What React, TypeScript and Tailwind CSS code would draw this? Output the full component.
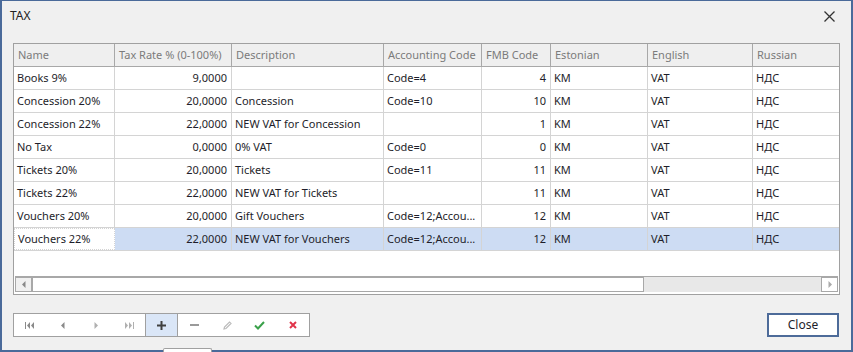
const rows = [
  { name: 'Books 9%', rate: '9,0000', desc: '', acc: 'Code=4', fmb: '4' },
  { name: 'Concession 20%', rate: '20,0000', desc: 'Concession', acc: 'Code=10', fmb: '10' },
  { name: 'Concession 22%', rate: '22,0000', desc: 'NEW VAT for Concession', acc: '', fmb: '1' },
  { name: 'No Tax', rate: '0,0000', desc: '0% VAT', acc: 'Code=0', fmb: '0' },
  { name: 'Tickets 20%', rate: '20,0000', desc: 'Tickets', acc: 'Code=11', fmb: '11' },
  { name: 'Tickets 22%', rate: '22,0000', desc: 'NEW VAT for Tickets', acc: '', fmb: '11' },
  { name: 'Vouchers 20%', rate: '20,0000', desc: 'Gift Vouchers', acc: 'Code=12;Accou...', fmb: '12' },
  { name: 'Vouchers 22%', rate: '22,0000', desc: 'NEW VAT for Vouchers', acc: 'Code=12;Accou...', fmb: '12' },
]

const cols = 'grid grid-cols-[101px_117px_152px_98px_69px_97px_105px_1fr]'

function NavIcon({ kind }: { kind: string }) {
  const c = '#8a8a8a'
  if (kind === 'first')
    return (
      <svg width="10" height="7" viewBox="0 0 10 7">
        <rect x="0" y="0" width="1" height="7" fill={c} />
        <path d="M5 0 L2 3.5 L5 7Z M9 0 L6 3.5 L9 7Z" fill={c} />
      </svg>
    )
  if (kind === 'prev')
    return (
      <svg width="4" height="7" viewBox="0 0 4 7">
        <path d="M3.5 0 L0 3.5 L3.5 7Z" fill={c} />
      </svg>
    )
  if (kind === 'next')
    return (
      <svg width="4" height="7" viewBox="0 0 4 7">
        <path d="M0.5 0 L4 3.5 L0.5 7Z" fill="#b0b0b0" />
      </svg>
    )
  return (
    <svg width="10" height="7" viewBox="0 0 10 7">
      <path d="M1 0 L4 3.5 L1 7Z M5 0 L8 3.5 L5 7Z" fill="#b0b0b0" />
      <rect x="9" y="0" width="1" height="7" fill="#b0b0b0" />
    </svg>
  )
}

export default function App() {
  const font = { fontFamily: '"Noto Sans", "Open Sans", sans-serif' }
  return (
    <div
      className="relative w-[853px] h-[352px] bg-[#f0f0f0] border-t border-x-2 border-b-2 border-[#4a6a9a] text-[11px] text-[#1e1e2a]"
      style={font}
    >
      <div className="flex items-center justify-between h-[30px] pl-[8px] pr-[16px]">
        <span className="text-[12px] text-[#222]">TAX</span>
        <svg width="11" height="11" viewBox="0 0 11 11">
          <path d="M0.5 0.5 L10.5 10.5 M10.5 0.5 L0.5 10.5" stroke="#333" strokeWidth="1.3" />
        </svg>
      </div>

      <div className="ml-[11px] mt-[12px] w-[827px] h-[252px] border border-[#a0a0a0] bg-white flex flex-col">
        <div className={`${cols} h-[23px] bg-[#efefef] text-[#7b7b7b] border-b border-[#a8a8a8]`}>
          {['Name', 'Tax Rate % (0-100%)', 'Description', 'Accounting Code', 'FMB Code', 'Estonian', 'English', 'Russian'].map(
            (h, i) => (
              <div key={h} className={`flex items-center pl-[4px] ${i < 7 ? 'border-r border-[#a8a8a8]' : ''}`}>
                {h}
              </div>
            ),
          )}
        </div>
        {rows.map((r, i) => {
          const sel = i === rows.length - 1
          const bg = sel ? 'bg-[#cddcf3]' : 'bg-white'
          const cell = `flex items-center h-[22px] pt-[1px] border-r border-[#d4d4d4] ${bg}`
          return (
            <div key={r.name} className={`${cols} border-b border-[#d4d4d4]`}>
              <div
                className={`flex items-center h-[22px] pt-[1px] border-r border-[#d4d4d4] pl-[3px] bg-white ${
                  sel ? 'border border-dotted border-[#222]' : ''
                }`}
              >
                {r.name}
              </div>
              <div className={`${cell} justify-end pr-[4px]`}>{r.rate}</div>
              <div className={`${cell} pl-[3px]`}>{r.desc}</div>
              <div className={`${cell} pl-[3px]`}>{r.acc}</div>
              <div className={`${cell} justify-end pr-[4px]`}>{r.fmb}</div>
              <div className={`${cell} pl-[3px]`}>KM</div>
              <div className={`${cell} pl-[3px]`}>VAT</div>
              <div className={`flex items-center h-[22px] pt-[1px] pl-[3px] ${bg}`}>НДС</div>
            </div>
          )
        })}
        <div className="flex-1" />
        <div className="flex h-[16px] mb-[2px] mx-[1px] bg-[#e8e8e8] border-t border-[#a8a8a8]">
          <div className="w-[17px] flex items-center justify-center bg-[#f0f0f0] border border-[#a8a8a8]">
            <svg width="4" height="7" viewBox="0 0 4 7">
              <path d="M3.5 0 L0 3.5 L3.5 7Z" fill="#888" />
            </svg>
          </div>
          <div className="w-[612px] bg-white border border-[#a8a8a8]" />
          <div className="flex-1" />
          <div className="w-[17px] flex items-center justify-center bg-white border border-[#a8a8a8]">
            <svg width="4" height="7" viewBox="0 0 4 7">
              <path d="M0.5 0 L4 3.5 L0.5 7Z" fill="#aaa" />
            </svg>
          </div>
        </div>
      </div>

      <div className="flex justify-between items-start mt-[18px] ml-[11px] mr-[12px]">
        <div className="flex h-[24px] w-[297px] border border-[#a0a0a0] bg-white">
          {['first', 'prev', 'next', 'last'].map((k) => (
            <div key={k} className="w-[33px] flex items-center justify-center">
              <NavIcon kind={k} />
            </div>
          ))}
          <div className="w-[33px] flex items-center justify-center bg-[#dae6f7] border-x border-[#a0a0a0]">
            <svg width="9" height="9" viewBox="0 0 9 9">
              <path d="M4.5 0 V9 M0 4.5 H9" stroke="#404040" strokeWidth="2" />
            </svg>
          </div>
          <div className="w-[33px] flex items-center justify-center">
            <svg width="9" height="2" viewBox="0 0 9 2">
              <rect width="9" height="2" fill="#9a9a9a" />
            </svg>
          </div>
          <div className="w-[33px] flex items-center justify-center">
            <svg width="9" height="9" viewBox="0 0 9 9">
              <path d="M1 8 L1.5 6 L6.5 1 L8 2.5 L3 7.5Z" fill="none" stroke="#bbbbbb" strokeWidth="1.2" />
            </svg>
          </div>
          <div className="w-[33px] flex items-center justify-center">
            <svg width="11" height="9" viewBox="0 0 11 9">
              <path d="M1 4.5 L4 7.5 L10 1" fill="none" stroke="#3aa14a" strokeWidth="2" />
            </svg>
          </div>
          <div className="w-[33px] flex items-center justify-center">
            <svg width="8" height="8" viewBox="0 0 8 8">
              <path d="M1 1 L7 7 M7 1 L1 7" stroke="#e0344a" strokeWidth="2" />
            </svg>
          </div>
        </div>
        <button className="w-[72px] h-[24px] bg-white border-2 border-[#4d6b99] text-[12px] text-[#1e1e2a]" style={font}>
          Close
        </button>
      </div>

      <div className="absolute left-[161px] bottom-[-2px] w-[49px] h-[4px] bg-white border-t border-x border-[#a0a0a0] rounded-t-[2px]" />
    </div>
  )
}
